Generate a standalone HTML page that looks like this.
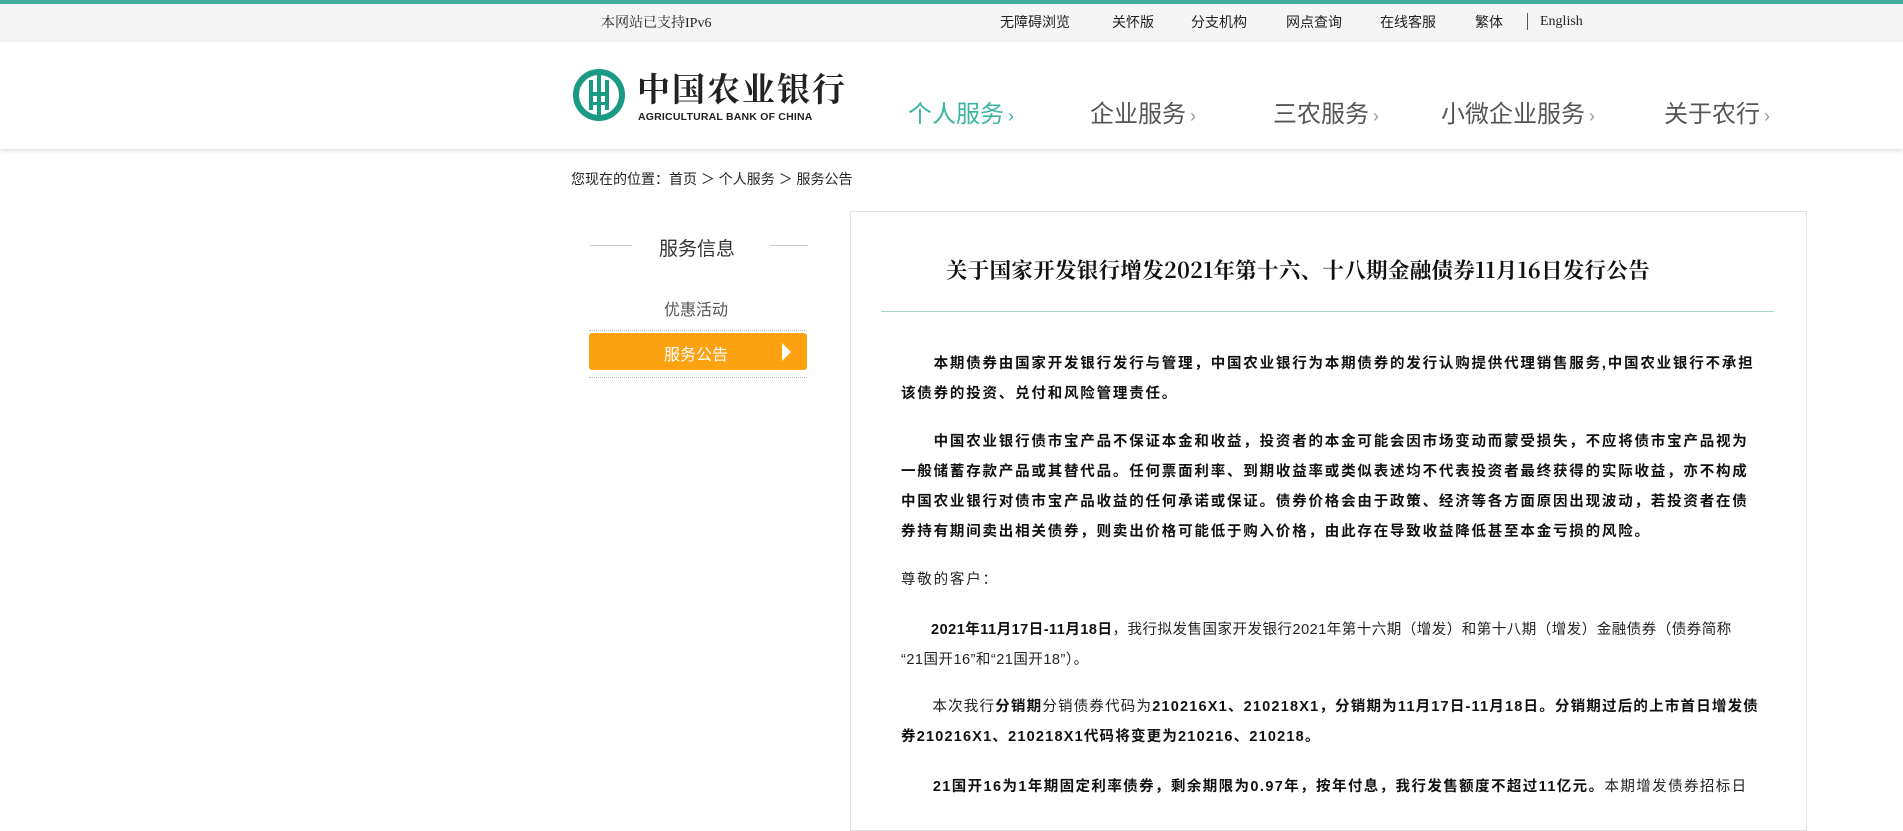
<!DOCTYPE html>
<html><head><meta charset="utf-8">
<style>
*{margin:0;padding:0;box-sizing:border-box}
body{width:1903px;height:804px;overflow:hidden;background:#fff;font-family:"Liberation Sans","Noto Sans CJK SC",sans-serif;color:#333;position:relative}
.abs{position:absolute;white-space:nowrap}
#topline{position:absolute;left:0;top:0;width:1903px;height:4px;background:#3fae9c}
#topbar{position:absolute;left:0;top:4px;width:1903px;height:38px;background:#f5f5f5}
#header{position:absolute;left:0;top:42px;width:1903px;height:107px;background:#fff;box-shadow:0 2px 4px rgba(0,0,0,.12)}
.tl{font-size:14px;color:#222;top:12px}
.nav{font-size:24px;color:#555;top:94px}
.nav b{font-weight:normal;font-size:18px;color:#999;margin-left:4px}
.bc{font-size:14px;color:#222}
.p{position:absolute;left:901px;font-size:14.5px;letter-spacing:1.8px;color:#222;white-space:nowrap;line-height:30px}
.p b{font-weight:bold;color:#111}
</style></head><body>
<div id="topline"></div>
<div id="topbar"></div>
<div class="abs tl" style="left:601px;font-family:'Liberation Serif','Noto Serif CJK SC',serif">本网站已支持IPv6</div>
<div class="abs tl" style="left:1000px">无障碍浏览</div>
<div class="abs tl" style="left:1112px">关怀版</div>
<div class="abs tl" style="left:1191px">分支机构</div>
<div class="abs tl" style="left:1286px">网点查询</div>
<div class="abs tl" style="left:1380px">在线客服</div>
<div class="abs tl" style="left:1475px">繁体</div>
<div class="abs" style="left:1527px;top:13px;width:1px;height:17px;background:#555"></div>
<div class="abs tl" style="left:1540px;top:14px;font-family:'Liberation Serif',serif">English</div>
<div id="header"></div>
<svg class="abs" style="left:572px;top:68px" width="56" height="54" viewBox="0 0 56 54">
<circle cx="27" cy="27" r="23" fill="none" stroke="#1a9a83" stroke-width="6"/>
<rect x="17" y="12" width="4" height="30" fill="#1a9a83"/><rect x="33" y="12" width="4" height="30" fill="#1a9a83"/>
<rect x="25" y="2" width="4" height="50" fill="#1a9a83"/>
<rect x="17" y="24" width="20" height="4" fill="#1a9a83"/><rect x="20" y="34" width="14" height="3" fill="#1a9a83"/>
</svg>
<div class="abs" style="left:637px;top:68px;font-size:33px;font-weight:bold;color:#222;letter-spacing:2px;font-family:'Noto Serif CJK SC',serif;line-height:40px">中国农业银行</div>
<div class="abs" style="left:638px;top:111px;font-size:10.5px;font-weight:bold;color:#222;letter-spacing:.2px">AGRICULTURAL BANK OF CHINA</div>
<div class="abs nav" style="left:908px;color:#3bb5a0">个人服务<b style="color:#3bb5a0">›</b></div>
<div class="abs nav" style="left:1090px">企业服务<b>›</b></div>
<div class="abs nav" style="left:1273px">三农服务<b>›</b></div>
<div class="abs nav" style="left:1441px">小微企业服务<b>›</b></div>
<div class="abs nav" style="left:1664px">关于农行<b>›</b></div>
<div class="abs bc" style="left:571px;top:169px">您现在的位置：首页 ＞ 个人服务 ＞ 服务公告</div>
<div class="abs" style="left:590px;top:245px;width:42px;height:1px;background:#ccc"></div>
<div class="abs" style="left:770px;top:245px;width:38px;height:1px;background:#ccc"></div>
<div class="abs" style="left:659px;top:234px;font-size:19px;color:#333">服务信息</div>
<div class="abs" style="left:664px;top:296px;font-size:16px;color:#555">优惠活动</div>
<div class="abs" style="left:589px;top:330px;width:218px;border-top:1px dotted #bbb"></div>
<div class="abs" style="left:589px;top:333px;width:218px;height:37px;background:#fca10f;border-radius:3px"></div>
<div class="abs" style="left:664px;top:341px;font-size:16px;color:#fff">服务公告</div>
<div class="abs" style="left:782px;top:343px;width:0;height:0;border-left:9px solid #fff;border-top:9px solid transparent;border-bottom:9px solid transparent"></div>
<div class="abs" style="left:589px;top:377px;width:218px;border-top:1px dotted #bbb"></div>
<div class="abs" style="left:850px;top:211px;width:957px;height:620px;border:1px solid #e2e2e2"></div>
<div class="abs" style="left:946px;top:254px;font-size:21.5px;font-weight:bold;color:#111;font-family:'Noto Serif CJK SC',serif;letter-spacing:.3px">关于国家开发银行增发2021年第十六、十八期金融债券11月16日发行公告</div>
<div class="abs" style="left:881px;top:311px;width:893px;height:1px;background:#a8d5c8"></div>
<div class="p" style="top:349px"><b>&emsp;&emsp;本期债券由国家开发银行发行与管理，中国农业银行为本期债券的发行认购提供代理销售服务,中国农业银行不承担<br>该债券的投资、兑付和风险管理责任。</b></div>
<div class="p" style="top:427px"><b>&emsp;&emsp;中国农业银行债市宝产品不保证本金和收益，投资者的本金可能会因市场变动而蒙受损失，不应将债市宝产品视为<br>一般储蓄存款产品或其替代品。任何票面利率、到期收益率或类似表述均不代表投资者最终获得的实际收益，亦不构成<br>中国农业银行对债市宝产品收益的任何承诺或保证。债券价格会由于政策、经济等各方面原因出现波动，若投资者在债<br>券持有期间卖出相关债券，则卖出价格可能低于购入价格，由此存在导致收益降低甚至本金亏损的风险。</b></div>
<div class="p" style="top:565px">尊敬的客户：</div>
<div class="p" style="top:615px;letter-spacing:0.5px">&emsp;&emsp;<b>2021年11月17日-11月18日</b>，我行拟发售国家开发银行2021年第十六期（增发）和第十八期（增发）金融债券（债券简称<br>“21国开16”和“21国开18”）。</div>
<div class="p" style="top:692px;letter-spacing:1.2px">&emsp;&emsp;本次我行<b>分销期</b>分销债券代码为<b>210216X1、210218X1，分销期为11月17日-11月18日。分销期过后的上市首日增发债<br>券210216X1、210218X1代码将变更为210216、210218。</b></div>
<div class="p" style="top:772px;letter-spacing:1.4px">&emsp;&emsp;<b>21国开16为1年期固定利率债券，剩余期限为0.97年，按年付息，我行发售额度不超过11亿元。</b>本期增发债券招标日</div>
</body></html>
